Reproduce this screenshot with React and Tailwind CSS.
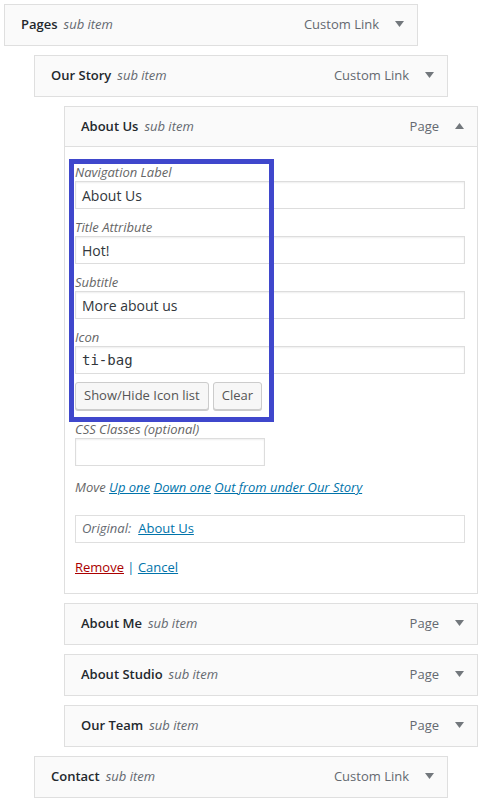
import React from "react";

const FONT = "font-['Segoe_UI','Open_Sans',sans-serif]";

function Arrow({ up }) {
  return (
    <svg width="9" height="6" viewBox="0 0 9 6" className="shrink-0" aria-hidden="true">
      {up ? <polygon points="0,6 9,6 4.5,0" fill="#72777c" /> : <polygon points="0,0 9,0 4.5,6" fill="#72777c" />}
    </svg>
  );
}

function Handle({ title, type, up, open }) {
  return (
    <div
      className={`flex h-[40px] items-center pl-[16px] pr-[13px] bg-[#fafafa] text-[13px] ${open ? "border-b border-[#dfdfdf]" : ""}`}
    >
      <span className="font-semibold text-[#23282d]">{title}</span>
      <span className="ml-[6px] italic text-[#646970]">sub item</span>
      <span className="ml-auto text-[#646970]">{type}</span>
      <span className="ml-[16px] w-[9px] flex items-center -mt-[2px]">
        <Arrow up={up} />
      </span>
    </div>
  );
}

function MenuItem({ depth, title, type }) {
  const indent = ["ml-[4px]", "ml-[34px]", "ml-[64px]"][depth];
  return (
    <div className={`${indent} w-[414px] border border-[#dfdfdf] mb-[9px]`}>
      <Handle title={title} type={type} />
    </div>
  );
}

function Field({ label, value, mono, last }) {
  return (
    <div className={last ? "" : "mb-[10px]"}>
      <div className="h-[17px] leading-[17px] text-[13px] italic text-[#666]">{label}</div>
      <div className="h-[28px] border border-[#ddd] shadow-[inset_0_1px_2px_rgba(0,0,0,0.07)] flex items-center px-[6px]">
        <span
          className={
            mono
              ? "font-['DejaVu_Sans_Mono','Liberation_Mono',monospace] text-[14px] text-[#32373c]"
              : "text-[14px] text-[#32373c]"
          }
        >
          {value}
        </span>
      </div>
    </div>
  );
}

function Button({ children }) {
  return (
    <button
      type="button"
      className="h-[28px] px-[8px] rounded-[3px] border border-[#ccc] bg-[#f7f7f7] shadow-[0_1px_0_#ccc] text-[13px] text-[#555]"
    >
      {children}
    </button>
  );
}

function ExpandedItem() {
  return (
    <div className="relative ml-[64px] w-[414px] border border-[#dfdfdf] mb-[9px] bg-white">
      <Handle title="About Us" type="Page" up open />
      <div className="pt-[17px] pb-[17px] pl-[10px] pr-[12px]">
        <Field label="Navigation Label" value="About Us" />
        <Field label="Title Attribute" value="Hot!" />
        <Field label="Subtitle" value="More about us" />
        <Field label="Icon" value="ti-bag" mono last />
        <div className="flex gap-[4px] mt-[8px]">
          <Button>Show/Hide Icon list</Button>
          <Button>Clear</Button>
        </div>
        <div className="mt-[11px] h-[17px] leading-[17px] text-[13px] italic text-[#666]">CSS Classes (optional)</div>
        <div className="w-[190px] h-[28px] border border-[#ddd] shadow-[inset_0_1px_2px_rgba(0,0,0,0.07)]" />
        <div className="mt-[12px] h-[18px] leading-[18px] text-[13px] italic text-[#666]">
          Move{" "}
          <a href="#" className="text-[#0073aa] underline">Up one</a>{" "}
          <a href="#" className="text-[#0073aa] underline">Down one</a>{" "}
          <a href="#" className="text-[#0073aa] underline">Out from under Our Story</a>
        </div>
        <div className="mt-[19px] h-[28px] border border-[#dfdfdf] flex items-center px-[6px] text-[13px]">
          <span className="italic text-[#646970]">Original:</span>
          <a href="#" className="ml-[7px] text-[#0073aa] underline">About Us</a>
        </div>
        <div className="mt-[15px] h-[18px] leading-[18px] text-[13px] text-[#0073aa]">
          <a href="#" className="text-[#a00] underline">Remove</a> |{" "}
          <a href="#" className="underline">Cancel</a>
        </div>
      </div>
      <div className="absolute left-[4px] top-[52px] w-[205px] h-[263px] border-[5px] border-[#3f47cc]" />
    </div>
  );
}

export default function App() {
  return (
    <div className={`${FONT} bg-white w-[488px] h-[801px] pt-[4px]`}>
      <MenuItem depth={0} title="Pages" type="Custom Link" />
      <MenuItem depth={1} title="Our Story" type="Custom Link" />
      <ExpandedItem />
      <MenuItem depth={2} title="About Me" type="Page" />
      <MenuItem depth={2} title="About Studio" type="Page" />
      <MenuItem depth={2} title="Our Team" type="Page" />
      <MenuItem depth={1} title="Contact" type="Custom Link" />
    </div>
  );
}
